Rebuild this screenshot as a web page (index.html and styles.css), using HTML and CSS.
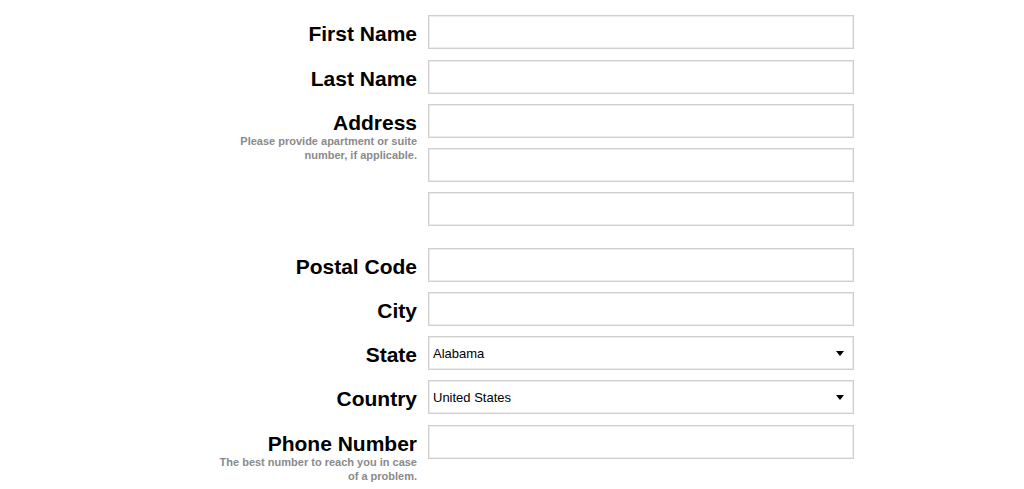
FILE: index.html
```html
<!DOCTYPE html>
<html lang="en">
<head>
    <meta charset="UTF-8">
    <meta name="viewport" content="width=device-width, initial-scale=1.0">
    <title>Shipping Address</title>
    <link rel="stylesheet" href="styles.css">
</head>
<body>
    <form id="addressForm">
        <div class="row first">
            <div class="label-box"><label for="firstName">First Name</label></div>
            <div class="fields"><input type="text" id="firstName" class="field"></div>
        </div>
        <div class="row">
            <div class="label-box"><label for="lastName">Last Name</label></div>
            <div class="fields"><input type="text" id="lastName" class="field"></div>
        </div>
        <div class="row group">
            <div class="label-box">
                <label for="address1">Address</label>
                <p class="hint">Please provide apartment or suite number, if applicable.</p>
            </div>
            <div class="fields">
                <input type="text" id="address1" class="field">
                <input type="text" id="address2" class="field">
                <input type="text" id="address3" class="field">
            </div>
        </div>
        <div class="row">
            <div class="label-box"><label for="postalCode">Postal Code</label></div>
            <div class="fields"><input type="text" id="postalCode" class="field"></div>
        </div>
        <div class="row">
            <div class="label-box"><label for="city">City</label></div>
            <div class="fields"><input type="text" id="city" class="field"></div>
        </div>
        <div class="row">
            <div class="label-box"><label for="state">State</label></div>
            <div class="fields">
                <select id="state" class="field select">
                    <option>Alabama</option>
                    <option>Alaska</option>
                    <option>Arizona</option>
                </select>
            </div>
        </div>
        <div class="row last-select">
            <div class="label-box"><label for="country">Country</label></div>
            <div class="fields">
                <select id="country" class="field select">
                    <option>United States</option>
                    <option>Canada</option>
                </select>
            </div>
        </div>
        <div class="row">
            <div class="label-box">
                <label for="phone">Phone Number</label>
                <p class="hint">The best number to reach you in case of a problem.</p>
            </div>
            <div class="fields"><input type="tel" id="phone" class="field"></div>
        </div>
    </form>
</body>
</html>
```

FILE: styles.css
```css
body {
    margin: 0;
    background: #fff;
    font-family: "Liberation Sans", Arial, Helvetica, sans-serif;
    color: #000;
}

#addressForm {
    padding: 15px 0 0 212px;
}

.row {
    display: flex;
    margin-bottom: 10px;
}

.row.first,
.row.last-select {
    margin-bottom: 11px;
}

.row.group {
    margin-bottom: 22px;
}

.label-box {
    width: 205px;
    margin-right: 11px;
    padding-top: 8px;
    text-align: right;
}

.label-box label {
    display: block;
    font-size: 21px;
    font-weight: bold;
    line-height: 22px;
}

.hint {
    margin: 0;
    font-size: 11px;
    font-weight: bold;
    line-height: 14px;
    color: #8a8a8a;
}

.fields {
    display: flex;
    flex-direction: column;
    gap: 10px;
}

.field {
    box-sizing: border-box;
    width: 426px;
    height: 34px;
    margin: 0;
    padding: 0 4px;
    border: 1px solid #cfcfcf;
    box-shadow: inset 0 0 0 1px #ececec;
    border-radius: 0;
    background: #fff;
    font-family: "Liberation Sans", Arial, Helvetica, sans-serif;
    font-size: 13px;
    color: #000;
    outline: none;
}

.select {
    appearance: none;
    -webkit-appearance: none;
    background-image: url("data:image/svg+xml,%3Csvg xmlns='http://www.w3.org/2000/svg' width='8' height='5'%3E%3Cpath d='M0 0h8L4 5z' fill='%23000'/%3E%3C/svg%3E");
    background-repeat: no-repeat;
    background-position: right 9px center;
}
```
